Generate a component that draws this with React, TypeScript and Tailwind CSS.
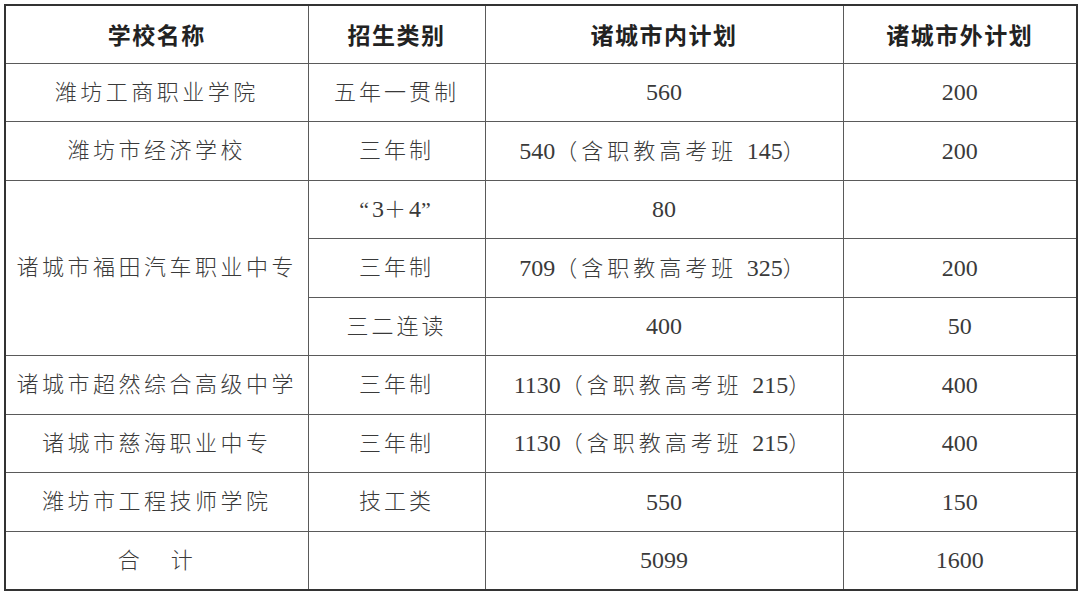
const rows: { name?: string; span?: number; type: string; inner: string; outer: string }[] = [
  { name: "潍坊工商职业学院", type: "五年一贯制", inner: "560", outer: "200" },
  { name: "潍坊市经济学校", type: "三年制", inner: "540（含职教高考班 145）", outer: "200" },
  { name: "诸城市福田汽车职业中专", span: 3, type: "“3＋4”", inner: "80", outer: "" },
  { type: "三年制", inner: "709（含职教高考班 325）", outer: "200" },
  { type: "三二连读", inner: "400", outer: "50" },
  { name: "诸城市超然综合高级中学", type: "三年制", inner: "1130（含职教高考班 215）", outer: "400" },
  { name: "诸城市慈海职业中专", type: "三年制", inner: "1130（含职教高考班 215）", outer: "400" },
  { name: "潍坊市工程技师学院", type: "技工类", inner: "550", outer: "150" },
];

const body =
  "font-['Liberation_Serif','Noto_Sans_CJK_SC',serif] font-light text-[22px] tracking-[3px] text-[#3a3a3a] text-center";
const cell = "border border-[#5a5a5a] h-[58.5px] p-0";

// digits are set a touch larger and without the CJK letter spacing
function Mixed({ text }: { text: string }) {
  const parts = text.split(/(\d+)/);
  return (
    <>
      {parts.map((p, i) =>
        /^\d+$/.test(p) ? (
          <span key={i} className="text-[24px] tracking-normal">
            {p}
          </span>
        ) : (
          <span key={i}>{p}</span>
        )
      )}
    </>
  );
}

export default function App() {
  return (
    <div className="w-[1080px] h-[597px] bg-white pt-[4px] pl-[4px]">
      <table className="border-collapse table-fixed border-2 border-[#333] w-[1072px]">
        <colgroup>
          <col className="w-[303px]" />
          <col className="w-[177px]" />
          <col className="w-[358px]" />
          <col className="w-[234px]" />
        </colgroup>
        <thead>
          <tr className="font-['Noto_Sans_CJK_SC',sans-serif] font-bold text-[23px] tracking-[1.5px] text-[#222] text-center">
            <th className={`${cell} h-[58px]`}>学校名称</th>
            <th className={`${cell} h-[58px]`}>招生类别</th>
            <th className={`${cell} h-[58px]`}>诸城市内计划</th>
            <th className={`${cell} h-[58px]`}>诸城市外计划</th>
          </tr>
        </thead>
        <tbody>
          {rows.map((r, i) => (
            <tr key={i} className={body}>
              {r.name && (
                <td className={`${cell} tracking-[3.5px]`} rowSpan={r.span ?? 1}>
                  {r.name}
                </td>
              )}
              <td className={cell}>
                <Mixed text={r.type} />
              </td>
              <td className={`${cell} tracking-[4px]`}>
                <Mixed text={r.inner} />
              </td>
              <td className={cell}>
                <Mixed text={r.outer} />
              </td>
            </tr>
          ))}
          <tr className={body}>
            <td className={cell}>
              合<span className="inline-block w-[28px]" />计
            </td>
            <td className={cell}></td>
            <td className={cell}>
              <Mixed text="5099" />
            </td>
            <td className={cell}>
              <Mixed text="1600" />
            </td>
          </tr>
        </tbody>
      </table>
    </div>
  );
}
